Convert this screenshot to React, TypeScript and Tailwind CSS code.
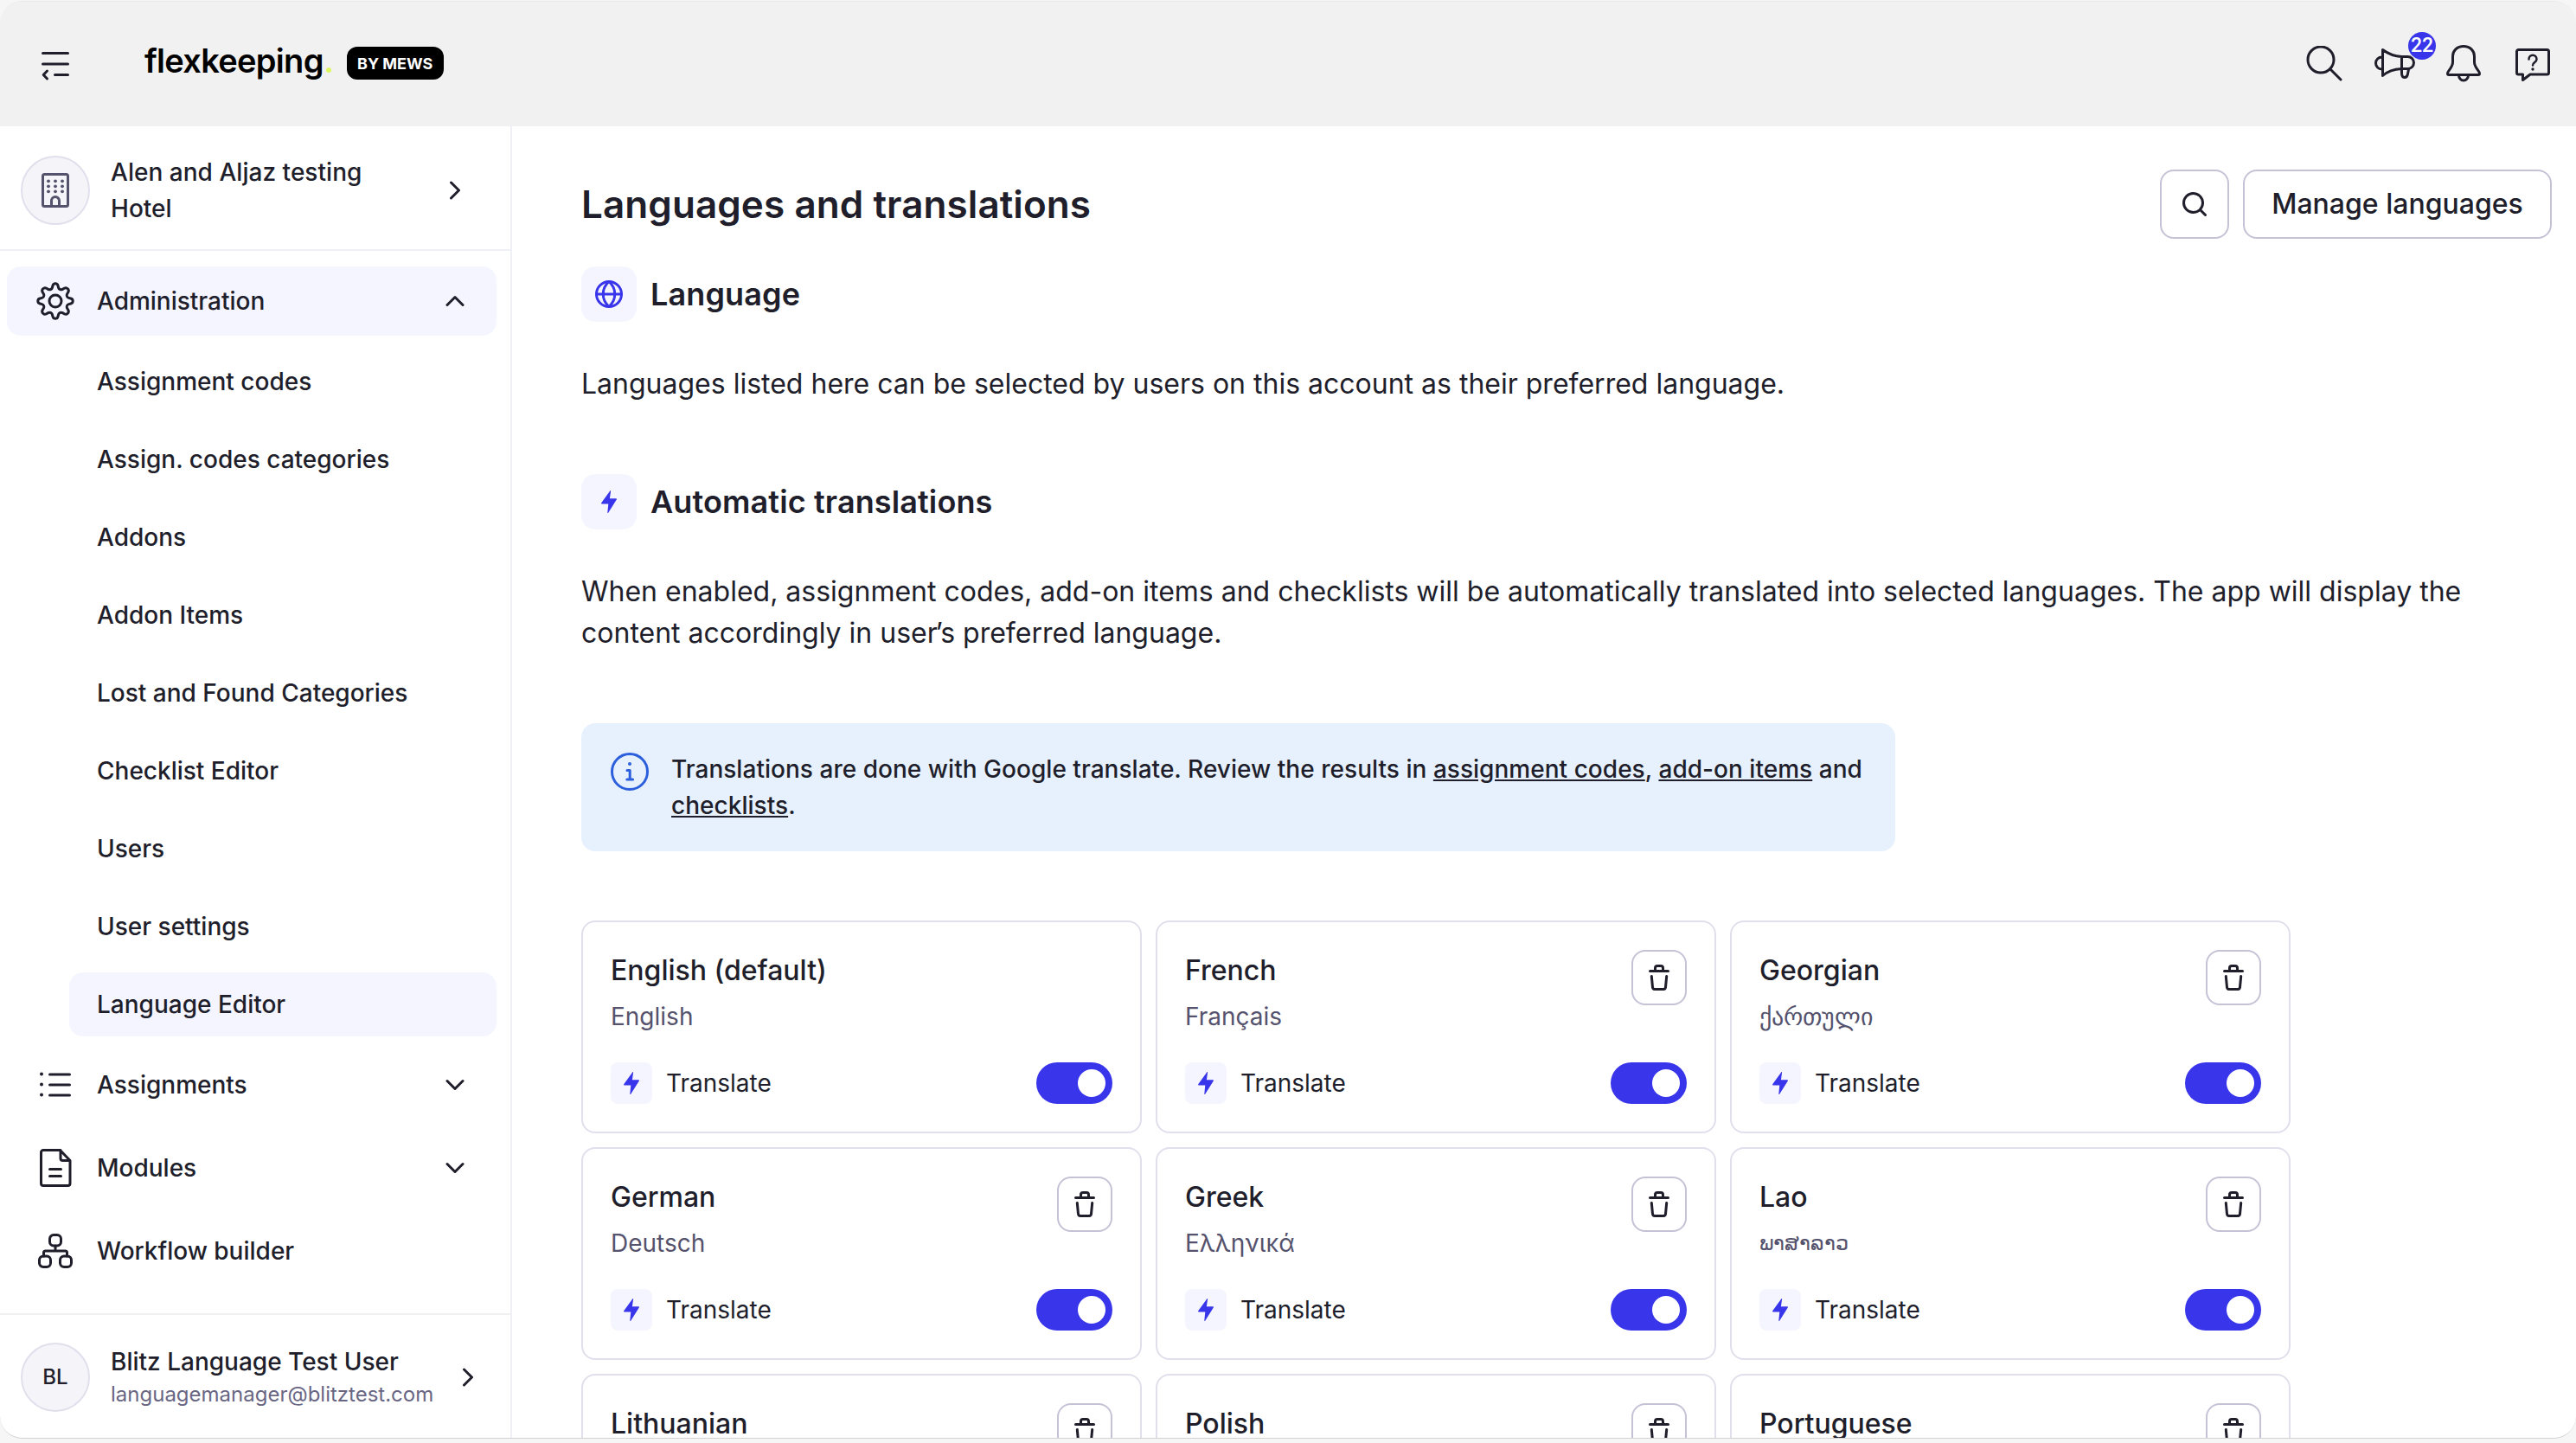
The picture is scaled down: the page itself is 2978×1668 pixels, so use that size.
import { ReactNode } from "react";
import clsx from "clsx";

const adminItems = [
  "Assignment codes",
  "Assign. codes categories",
  "Addons",
  "Addon Items",
  "Lost and Found Categories",
  "Checklist Editor",
  "Users",
  "User settings",
  "Language Editor",
];

type Language = {
  name: string;
  native: string;
  isDefault?: boolean;
  nativeClass?: string;
};

const languages: Language[] = [
  { name: "English (default)", native: "English", isDefault: true },
  { name: "French", native: "Français" },
  { name: "Georgian", native: "ქართული" },
  { name: "German", native: "Deutsch" },
  { name: "Greek", native: "Ελληνικά" },
  { name: "Lao", native: "ພາສາລາວ", nativeClass: "text-[23.6px] font-light" },
  { name: "Lithuanian", native: "Lietuvių" },
  { name: "Polish", native: "Polski" },
  { name: "Portuguese", native: "Português" },
];

type IconProps = {
  w: number;
  h?: number;
  sw?: number;
  className?: string;
  children: ReactNode;
};

// every icon is drawn on a grid of its own pixel size
const Icon = ({ w, h = w, sw = 3, className, children }: IconProps) => (
  <svg
    width={w}
    height={h}
    viewBox={`0 0 ${w} ${h}`}
    fill="none"
    stroke="currentColor"
    strokeWidth={sw}
    strokeLinecap="round"
    strokeLinejoin="round"
    className={clsx("shrink-0", className)}
  >
    {children}
  </svg>
);

const MenuIcon = () => (
  <Icon w={32} h={40}>
    <path d="M1.5 7.500h29M1.5 20h29M15.500 32.500h15M6.500 28l-4.300 4.500 4.300 4.500" />
  </Icon>
);

const BuildingIcon = () => (
  <Icon w={32} h={40} className="text-[#55526d]">
    <rect x="1.5" y="1.5" width="29" height="37" rx="2" />
    <path d="M11.5 38v-6a4.500 4.500 0 0 1 9 0v6" />
    <g fill="currentColor" stroke="none">
      {[9.3, 15.3, 21.3].map((y) =>
        [8, 16, 24].map((x) => <circle key={`${x}-${y}`} cx={x} cy={y} r="1.9" />)
      )}
    </g>
  </Icon>
);

const GearIcon = () => (
  <Icon w={44} sw={3}>
    <circle cx="22" cy="22" r="7" />
    <path d="M19 4.200c.8-3.200 5.200-3.200 6 0l.6 2.300a3.200 3.200 0 0 0 4.700 1.900l2-1.200c2.900-1.700 6.200 1.600 4.500 4.500l-1.200 2a3.200 3.200 0 0 0 1.900 4.700l2.300.6c3.200.8 3.200 5.200 0 6l-2.300.6a3.200 3.200 0 0 0-1.900 4.700l1.200 2c1.700 2.900-1.600 6.200-4.500 4.500l-2-1.200a3.200 3.200 0 0 0-4.700 1.900l-.6 2.300c-.8 3.200-5.200 3.200-6 0l-.6-2.300a3.200 3.200 0 0 0-4.700-1.900l-2 1.200c-2.900 1.700-6.200-1.600-4.500-4.500l1.200-2a3.200 3.200 0 0 0-1.900-4.700l-2.300-.6c-3.200-.8-3.200-5.200 0-6l2.300-.6a3.200 3.200 0 0 0 1.900-4.700l-1.200-2c-1.700-2.900 1.600-6.200 4.500-4.500l2 1.200a3.200 3.200 0 0 0 4.700-1.900z" />
  </Icon>
);

const ListIcon = () => (
  <Icon w={44}>
    <path d="M15.500 10h23M15.500 22h23M15.500 34h23" />
    <g fill="currentColor" stroke="none">
      <circle cx="6" cy="9.500" r="2" />
      <circle cx="6" cy="21.500" r="2" />
      <circle cx="6" cy="33.500" r="2" />
    </g>
  </Icon>
);

const FileIcon = () => (
  <Icon w={44}>
    <path d="M27.500 1.500H8a2.500 2.500 0 0 0-2.500 2.500v36A2.500 2.500 0 0 0 8 42.500h28.500a2.500 2.500 0 0 0 2.500-2.500V13.500zM28 1.500v9.500a2.500 2.500 0 0 0 2.500 2.500H39M15.500 23.500h13M15.500 31.500h13" />
  </Icon>
);

const WorkflowIcon = () => (
  <Icon w={44}>
    <rect x="15.5" y="3.5" width="13" height="12.5" rx="4.5" />
    <rect x="3.5" y="28" width="13" height="12.5" rx="4.5" />
    <rect x="27.5" y="28" width="13" height="12.5" rx="4.5" />
    <path d="M22 16v6M8.500 28v-4a2 2 0 0 1 2-2h23a2 2 0 0 1 2 2v4" />
  </Icon>
);

const BoltIcon = () => (
  <svg width="18" height="26" viewBox="0 0 18 26" fill="#3935ea">
    <path d="M10.200.4c.4-.7 1-.4.900.3L9.900 9.300h7.300c.7 0 1 .7.6 1.300L8.200 25.700c-.4.6-1 .3-.9-.3l1-9.900H.8c-.7 0-1-.6-.6-1.200z" />
  </svg>
);

const Chevron = ({ dir }: { dir: "up" | "down" | "right" }) => {
  if (dir === "right")
    return (
      <Icon w={14} h={22}>
        <path d="M2.500 2l9 9-9 9" />
      </Icon>
    );
  return (
    <Icon w={22} h={14} className={clsx(dir === "up" && "rotate-180")}>
      <path d="M2 2.500l9 9 9-9" />
    </Icon>
  );
};

const Header = () => (
  <header className="flex h-36 shrink-0 items-center bg-[#f1f1f1] pr-[30px] pl-12">
    <MenuIcon />
    <div className="ml-[87px] flex items-center pb-0.5">
      <div className="flex items-baseline leading-none">
        <span className="-mt-1.5 text-[38px] font-semibold tracking-[-0.7px] text-black">
          flexkeeping
        </span>
        <span className="ml-[3px] size-1.5 rounded-full bg-[#dcf763]" />
      </div>
      <span className="ml-[18px] flex h-[38px] w-[112px] items-center justify-center rounded-xl bg-black text-[18px] font-bold text-white">
        BY MEWS
      </span>
    </div>
    <div className="ml-auto flex items-center">
      <Icon w={42}>
        <circle cx="17" cy="16" r="15" />
        <path d="M28 27l12 12" />
      </Icon>
      <div className="relative ml-9">
        <Icon w={50} h={40}>
          <path d="M10.500 3.500v30c5-4.500 14-7.500 22-8V11.500c-8-.5-16-3.500-22-8zM32.500 11.500h7a7 7 0 0 1 0 14h-7M9.500 12a6.500 6.500 0 0 0 0 14M32.500 26v4.500c0 6.500 6 6.500 7 1l1-5.500" />
        </Icon>
        <span className="absolute -top-[17px] left-10 flex size-8 items-center justify-center rounded-full bg-[#3935ea] font-['Roboto'] text-[23px] font-medium text-white">
          22
        </span>
      </div>
      <Icon w={42} h={44} className="ml-[33px]">
        <path d="M21 1.500c-7.500 0-12.500 5-12.500 11.500v7c0 6-6 10-6 13 0 1 .7 1.500 1.500 1.500h34c.8 0 1.500-.5 1.500-1.500 0-3-6-7-6-13v-7c0-6.500-5-11.500-12.500-11.500zM15.500 35a5.500 6 0 0 0 11 0" />
      </Icon>
      <Icon w={40} className="ml-[39px]">
        <path d="M3.500 3.500h33a2 2 0 0 1 2 2V30a2 2 0 0 1-2 2H17l-8.500 6.500V32h-5a2 2 0 0 1-2-2V5.500a2 2 0 0 1 2-2z" />
        <path strokeWidth="2.5" d="M15.500 14.500c0-6.500 9-6.500 9 0 0 3.500-4.500 3.500-4.500 7" />
        <circle cx="20" cy="26" r="1.700" fill="currentColor" stroke="none" />
      </Icon>
    </div>
  </header>
);

type NavItemProps = {
  icon: ReactNode;
  label: string;
  chevron?: "up" | "down";
  active?: boolean;
};

const NavItem = ({ icon, label, chevron, active }: NavItemProps) => (
  <div
    className={clsx(
      "flex h-20 items-center rounded-2xl pr-[37px] pl-[34px]",
      active && "bg-[#f5f5ff]"
    )}
  >
    {icon}
    <span className="ml-[26px] flex-1">{label}</span>
    {chevron && <Chevron dir={chevron} />}
  </div>
);

const Sidebar = () => (
  <aside className="flex w-[592px] shrink-0 flex-col border-r-2 border-[#efeff6] text-[28px] leading-[42px] font-medium">
    <div className="flex h-36 items-center border-b-2 border-[#efeff6] pt-1.5 pl-6">
      <span className="flex size-20 items-center justify-center rounded-full border-2 border-[#e1dfec] bg-[#f5f5f9]">
        <BuildingIcon />
      </span>
      <span className="ml-6 w-[391px] pr-16 tracking-[0.03px]">Alen and Aljaz testing Hotel</span>
      <Chevron dir="right" />
    </div>
    <nav className="flex flex-1 flex-col gap-4 px-2 pt-[18px] pr-4">
      <NavItem icon={<GearIcon />} label="Administration" chevron="up" active />
      <div className="flex flex-col gap-4 pl-[72px]">
        {adminItems.map((item) => (
          <div
            key={item}
            className={clsx(
              "flex h-[74px] items-center rounded-2xl pl-8",
              item === "Language Editor" && "bg-[#f5f5ff]"
            )}
          >
            {item}
          </div>
        ))}
      </div>
      <NavItem icon={<ListIcon />} label="Assignments" chevron="down" />
      <NavItem icon={<FileIcon />} label="Modules" chevron="down" />
      <NavItem icon={<WorkflowIcon />} label="Workflow builder" />
    </nav>
    <div className="flex h-[146px] items-center border-t-2 border-[#f0f0f0] pl-6">
      <span className="flex size-20 items-center justify-center rounded-full border-2 border-[#e1dfec] bg-[#f5f5f9] text-2xl">
        BL
      </span>
      <div className="ml-6 w-[406px]">
        <p className="leading-10">Blitz Language Test User</p>
        <p className="text-2xl leading-9 font-normal text-[#696684]">
          languagemanager@blitztest.com
        </p>
      </div>
      <Chevron dir="right" />
    </div>
  </aside>
);

const SectionTitle = ({ icon, title }: { icon: ReactNode; title: string }) => (
  <div className="flex items-center gap-4">
    <span className="flex size-16 items-center justify-center rounded-2xl bg-[#f5f5ff] text-[#3935ea]">
      {icon}
    </span>
    <h2 className="text-4xl leading-[54px] font-semibold tracking-[0.12px]">{title}</h2>
  </div>
);

const LanguageCard = ({ name, native, isDefault, nativeClass }: Language) => (
  <div className="h-[246px] rounded-2xl border-2 border-[#e1dfec] p-8">
    <div className="flex justify-between">
      <div>
        <h3 className="text-[32px] leading-[48px] font-medium">{name}</h3>
        <p
          className={clsx(
            "mt-2 h-[42px] leading-[42px] text-[#55526d]",
            nativeClass ?? "text-[28px]"
          )}
        >
          {native}
        </p>
      </div>
      {!isDefault && (
        <button className="flex size-16 items-center justify-center rounded-2xl border-2 border-[#c5c2d6]">
          <Icon w={24} h={30}>
            <path d="M1.500 7.500h21M7.500 7.500V4A2.500 2.500 0 0 1 10 1.500h4A2.500 2.500 0 0 1 16.500 4v3.500M3.300 13.500l1.200 12.700a2.500 2.500 0 0 0 2.500 2.300h10a2.500 2.500 0 0 0 2.500-2.300l1.200-12.700" />
          </Icon>
        </button>
      )}
    </div>
    <div className="mt-8 flex items-center">
      <span className="flex size-12 items-center justify-center rounded-lg bg-[#f5f5ff]">
        <BoltIcon />
      </span>
      <span className="ml-4 flex-1 text-[28px] leading-[42px]">Translate</span>
      <span className="flex h-12 w-[88px] items-center justify-end rounded-full bg-[#3935ea] pr-2">
        <span className="size-8 rounded-full bg-white" />
      </span>
    </div>
  </div>
);

const App = () => {
  return (
    <div className="h-[1668px] w-[2978px] overflow-hidden bg-[#f6f6f6] pt-px font-['Inter','Noto_Sans',sans-serif] text-[#201e2b]">
      <div className="flex h-[1662px] flex-col overflow-hidden rounded-[26px] border-y border-t-[#e8e8e8] border-b-[#d2d2d2] bg-white">
        <Header />
        <div className="flex h-[1518px] shrink-0">
          <Sidebar />
          <main className="flex-1 pt-[50px] pr-7 pl-20">
            <div className="flex h-20 items-center gap-4">
              <h1 className="flex-1 text-[44px] font-semibold tracking-[0.08px]">
                Languages and translations
              </h1>
              <button className="flex size-20 items-center justify-center rounded-2xl border-2 border-[#c5c2d6]">
                <Icon w={28}>
                  <circle cx="12.5" cy="12.5" r="11" />
                  <path d="M21 21l5.500 5.500" />
                </Icon>
              </button>
              <button className="flex h-20 w-[357px] items-center justify-center rounded-2xl border-2 border-[#c5c2d6] text-[32px] font-medium">
                Manage languages
              </button>
            </div>
            <div className="mt-8">
              <SectionTitle
                title="Language"
                icon={
                  <Icon w={32}>
                    <circle cx="16" cy="16" r="14.5" />
                    <path d="M1.500 16h29M16 1.500c-9 8-9 21 0 29M16 1.500c9 8 9 21 0 29" />
                  </Icon>
                }
              />
              <p className="mt-12 text-[32px] leading-[48px]">
                Languages listed here can be selected by users on this account as their preferred
                language.
              </p>
            </div>
            <div className="mt-20">
              <SectionTitle title="Automatic translations" icon={<BoltIcon />} />
              <p className="mt-12 text-[32px] leading-[48px]">
                When enabled, assignment codes, add-on items and checklists will be automatically
                translated into selected languages. The app will display the
                <br />
                content accordingly in use<span className="tracking-[-2.7px]">r’</span>s preferred
                language.
              </p>
            </div>
            <div className="mt-20 flex h-[148px] w-[1519px] rounded-2xl bg-[#e7f1fe] pt-8 pl-[34px]">
              <Icon w={44} className="mt-0.5 text-[#2c5fdc]">
                <circle cx="22" cy="22" r="20.5" />
                <path d="M19 20.500h3.200V31M18.800 31h6.800" />
                <circle cx="22" cy="13" r="2" fill="currentColor" stroke="none" />
              </Icon>
              <p className="ml-[26px] text-[28px] leading-[42px] font-medium tracking-[0.03px]">
                Translations are done with Google translate. Review the results in{" "}
                <a className="underline">assignment codes</a>,{" "}
                <a className="underline">add-on items</a> and
                <br />
                <a className="underline">checklists</a>.
              </p>
            </div>
            <div className="mt-20 grid w-[1976px] grid-cols-3 gap-4">
              {languages.map((lang) => (
                <LanguageCard key={lang.name} {...lang} />
              ))}
            </div>
          </main>
        </div>
      </div>
    </div>
  );
};

export default App;
